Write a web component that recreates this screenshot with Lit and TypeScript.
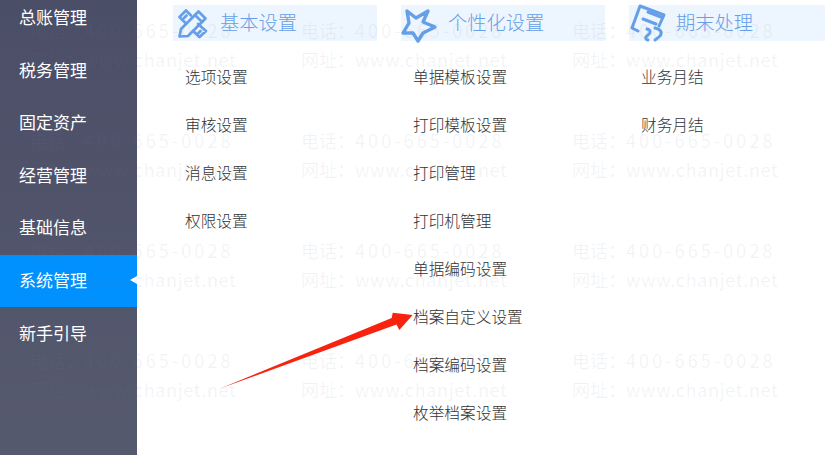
import { LitElement, html, css, svg } from 'lit';
import { customElement } from 'lit/decorators.js';

interface MenuColumn {
  title: string;
  icon: ReturnType<typeof svg>;
  items: string[];
}

const NAV = ['总账管理', '税务管理', '固定资产', '经营管理', '基础信息', '系统管理', '新手引导'];
const ACTIVE_NAV = '系统管理';

const pencilIcon = svg`
  <svg class="icon pencil" viewBox="0 0 30 29" fill="none" stroke="#659fe8" stroke-width="2.7" stroke-linejoin="round" stroke-linecap="round">
    <path d="M1.5 27.5l1.5-7.5L20.5 2.5l7 7L10 27z" />
    <path d="M17 6l7 7" />
    <path d="M13 6.5L8 1.5 1.5 8l6 6M8.5 6.5L6 9" />
    <path d="M20 15l8 7-6.5 6-6.5-6M22.5 22L20 24.5" />
  </svg>`;

const starIcon = svg`
  <svg class="icon star" viewBox="0 0 36 33" fill="none" stroke="#659fe8" stroke-width="3.4" stroke-linejoin="round" stroke-linecap="round">
    <path d="M6 2l9 7 12-7-5 11 12 5-12 6-5 8-5-8H2l6-10z" />
  </svg>`;

const docIcon = svg`
  <svg class="icon doc" viewBox="0 0 36 36" fill="none" stroke="#659fe8" stroke-width="3" stroke-linejoin="round" stroke-linecap="round">
    <path d="M9 26l-6-3L11 1l24 9-5 11" />
    <path d="M19 7l13 5M14 14l13 5" />
    <path d="M18 24c4 1 4 4 1 6s-3 4 0 5M26 23c5 1 8 4 5 8-2 2-4 3-5 4" />
  </svg>`;

const COLUMNS: MenuColumn[] = [
  { title: '基本设置', icon: pencilIcon, items: ['选项设置', '审核设置', '消息设置', '权限设置'] },
  {
    title: '个性化设置',
    icon: starIcon,
    items: ['单据模板设置', '打印模板设置', '打印管理', '打印机管理', '单据编码设置', '档案自定义设置', '档案编码设置', '枚举档案设置'],
  },
  { title: '期末处理', icon: docIcon, items: ['业务月结', '财务月结'] },
];

@customElement('app-root')
export class AppRoot extends LitElement {
  render() {
    const tiles = Array.from({ length: 12 });
    return html`
      <div class="page">
        <nav class="sidebar">
          ${NAV.map((n) => html`<div class="nav-item ${n === ACTIVE_NAV ? 'active' : ''}"><span>${n}</span></div>`)}
        </nav>
        <main class="content">
          ${COLUMNS.map(
            (col) => html`
              <section class="column">
                <header class="col-head">${col.icon}<span>${col.title}</span></header>
                ${col.items.map((item) => html`<div class="item"><span>${item}</span></div>`)}
              </section>
            `,
          )}
        </main>
        <div class="watermark">
          ${tiles.map(
            () => html`
              <div class="tile">
                <div>电话：<span class="phone">400-665-0028</span></div>
                <div>网址：<span class="url">www.chanjet.net</span></div>
              </div>
            `,
          )}
        </div>
        <svg class="arrow" viewBox="0 0 825 455">
          <polygon points="220.7,388.3 391.7,318 392.7,312.7 412.7,315 399.3,330 396.5,324.5" fill="#f7230f" />
        </svg>
      </div>
    `;
  }

  static styles = css`
    :host {
      display: block;
      font-family: 'Noto Sans CJK SC', 'Liberation Sans', sans-serif;
    }
    .page {
      position: relative;
      display: flex;
      width: 825px;
      height: 455px;
      overflow: hidden;
      background: #fff;
    }
    .sidebar {
      flex: 0 0 137px;
      background: linear-gradient(180deg, #4b4e67 0%, #565a6e 100%);
    }
    .nav-item {
      position: relative;
      display: flex;
      align-items: center;
      height: 52.6px;
      padding-left: 19px;
      font-size: 17px;
      color: #fff;
    }
    .nav-item span {
      margin-bottom: 3px;
    }
    .nav-item:first-child {
      margin-top: -8.3px;
    }
    .nav-item.active {
      background: #0091fe;
    }
    .nav-item.active::after {
      content: '';
      position: absolute;
      right: 0;
      top: 21.5px;
      border: 4.5px solid transparent;
      border-right: 7px solid #fff;
      border-left: 0;
    }
    .content {
      flex: none;
      display: grid;
      grid-template-columns: repeat(3, 204px);
      column-gap: 24px;
      align-content: start;
      padding: 5px 0 0 36px;
    }
    .col-head {
      display: flex;
      align-items: center;
      height: 36px;
      margin-bottom: 12px;
      background: #edf5fe;
      font-size: 19.3px;
      font-weight: 300;
      color: #659fe8;
    }
    .col-head span {
      margin-bottom: 3px;
    }
    .icon {
      flex: none;
      overflow: visible;
    }
    .pencil {
      width: 30px;
      height: 29px;
      margin: 0 12px 0 5px;
    }
    .star {
      width: 36px;
      height: 33px;
      margin: 4px 11px 0 0;
    }
    .doc {
      width: 36px;
      height: 36px;
      margin-right: 11px;
    }
    .item {
      display: flex;
      align-items: center;
      height: 48px;
      padding-left: 12px;
      font-size: 15.7px;
      font-weight: 300;
      color: #333;
    }
    .item span {
      margin-bottom: 2px;
    }
    .watermark {
      position: absolute;
      left: 30px;
      top: 0;
      display: grid;
      grid-template-columns: repeat(3, 271px);
      grid-auto-rows: 110px;
      pointer-events: none;
    }
    .tile {
      padding-top: 16px;
      font-size: 18px;
      line-height: 29px;
      white-space: nowrap;
      color: rgba(110, 120, 150, 0.09);
    }
    .phone {
      letter-spacing: 3.1px;
    }
    .url {
      letter-spacing: 0.65px;
    }
    .arrow {
      position: absolute;
      inset: 0;
      width: 825px;
      height: 455px;
      pointer-events: none;
    }
  `;
}

declare global {
  interface HTMLElementTagNameMap {
    'app-root': AppRoot;
  }
}
